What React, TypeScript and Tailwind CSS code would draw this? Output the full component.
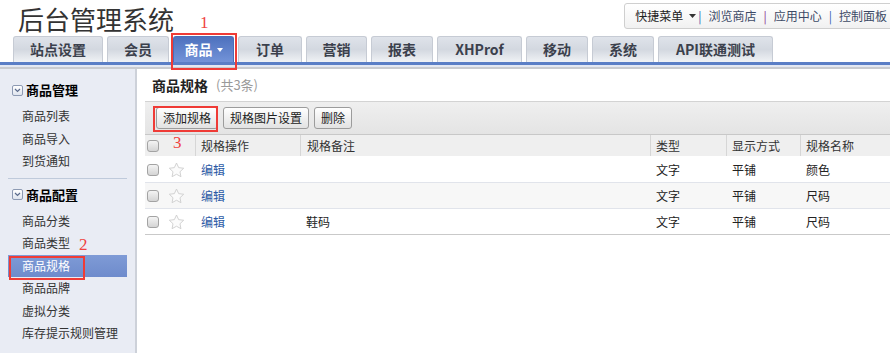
import { ReactNode } from 'react'

const font = { fontFamily: '"Noto Sans CJK SC", "Noto Sans", sans-serif' }

const tabs = [
  { label: '站点设置', w: 'w-[90px]' },
  { label: '会员', w: 'w-[62px]' },
  { label: '商品', w: 'w-[61px]', active: true },
  { label: '订单', w: 'w-[64px]' },
  { label: '营销', w: 'w-[61px]' },
  { label: '报表', w: 'w-[62px]' },
  { label: 'XHProf', w: 'w-[85px]' },
  { label: '移动', w: 'w-[62px]' },
  { label: '系统', w: 'w-[62px]' },
  { label: 'API联通测试', w: 'w-[115px]' },
]

const rows = [
  { note: '', type: '文字', mode: '平铺', name: '颜色' },
  { note: '', type: '文字', mode: '平铺', name: '尺码' },
  { note: '鞋码', type: '文字', mode: '平铺', name: '尺码' },
]

const Mark = ({ children, className }: { children: ReactNode; className: string }) => (
  <span
    className={`pointer-events-none absolute text-[17px] leading-none text-[#f0433f] ${className}`}
    style={{ fontFamily: '"Liberation Serif", serif' }}
  >
    {children}
  </span>
)

const Checkbox = () => (
  <span className="block h-[12px] w-[12px] rounded-[3px] border border-[#a3a3a3] bg-linear-to-b from-[#f4f4f4] to-[#d4d4d4]" />
)

const Star = () => (
  <svg width="17" height="16" viewBox="0 0 24 23" className="block">
    <path
      d="M12 1.5l3.1 6.6 7.2.9-5.3 5 1.4 7.1L12 17.6l-6.4 3.5L7 14l-5.3-5 7.2-.9z"
      fill="#fbfbfb"
      stroke="#cdcdcd"
      strokeWidth="1.3"
      strokeLinejoin="round"
    />
  </svg>
)

const GroupIcon = () => (
  <span className="flex h-[11px] w-[11px] items-center justify-center rounded-[2px] border border-[#8d9ab3] bg-linear-to-b from-white to-[#dfe4ee]">
    <svg width="7" height="5" viewBox="0 0 7 5">
      <path d="M1 1l2.5 2.5L6 1" fill="none" stroke="#5b6b8c" strokeWidth="1.2" />
    </svg>
  </span>
)

const SideGroup = ({ title, items, active }: { title: string; items: string[]; active?: string }) => (
  <div>
    <div className="flex h-[22px] items-center gap-[3px] pl-[12px] text-[13px] font-bold text-black">
      <GroupIcon />
      <span>{title}</span>
    </div>
    <div className="mt-[4px]">
      {items.map((it) => (
        <div
          key={it}
          className={
            it === active
              ? 'mx-[8px] flex h-[22.5px] items-center bg-linear-to-b from-[#7f9bd6] to-[#6e8bcc] pl-[14px] text-[12px] text-white'
              : 'mx-[8px] flex h-[22.5px] items-center pl-[14px] text-[12px] text-[#333]'
          }
        >
          {it}
        </div>
      ))}
    </div>
  </div>
)

const Button = ({ children }: { children: ReactNode }) => (
  <button className="flex h-[22px] items-center rounded-[3px] border border-[#9c9c9c] bg-linear-to-b from-white to-[#e2e2e2] px-[6px] text-[12px] text-[#222]">
    {children}
  </button>
)

export default function App() {
  return (
    <div className="relative h-[353px] w-[890px] overflow-hidden bg-white text-[#333]" style={font}>
      {/* header */}
      <div className="flex h-[36px] items-start">
        <div className="pl-[18px] text-[26px] leading-[38px] text-[#333]">后台管理系统</div>
        <div className="ml-auto mt-[3px] -mr-[4px] flex h-[26px] items-center rounded-l-[3px] border border-[#cfcfcf] bg-linear-to-b from-white to-[#f1f1f1] pl-[10px] pr-[6px] text-[12px]">
          <span className="text-[#222]">快捷菜单</span>
          <svg width="7" height="4" viewBox="0 0 7 4" className="ml-[6px]">
            <path d="M0 0h7L3.5 4z" fill="#333" />
          </svg>
          <span className="ml-[2px] text-[#3a62b0]">|</span>
          <span className="ml-[7px] text-[#3d4a66]">浏览商店</span>
          <span className="ml-[7px] text-[#8a2c8e]">|</span>
          <span className="ml-[7px] text-[#3d4a66]">应用中心</span>
          <span className="ml-[7px] text-[#3a62b0]">|</span>
          <span className="ml-[7px] text-[#3d4a66]">控制面板</span>
        </div>
      </div>

      {/* tabs */}
      <div className="relative flex h-[26px] items-end gap-[4px] pl-[13px]">
        {tabs.map((t) =>
          t.active ? (
            <div
              key={t.label}
              className={`${t.w} flex h-[26px] items-center justify-center gap-[4px] rounded-t-[3px] border border-b-0 border-[#4b6db7] bg-linear-to-b from-[#4d71be] to-[#7393d8] text-[14px] font-bold text-white`}
            >
              {t.label}
              <svg width="6" height="4" viewBox="0 0 6 4">
                <path d="M0 0h6L3 4z" fill="#fff" />
              </svg>
            </div>
          ) : (
            <div
              key={t.label}
              className={`${t.w} flex h-[26px] items-center justify-center rounded-t-[3px] border border-b-0 border-[#c6cbd4] bg-linear-to-b from-[#dfe3ea] via-[#d3d8e0] to-[#f0f2f5] text-[14px] font-bold text-[#3b404c]`}
            >
              {t.label}
            </div>
          ),
        )}
      </div>
      <div className="h-[3px] bg-[#5a7ec6]" />
      <div className="h-[2px] bg-[#e3e8f3]" />
      <div className="h-[2px] bg-[#c9cbd0]" />

      {/* body */}
      <div className="flex h-[284px]">
        <aside className="w-[137px] shrink-0 border-r-2 border-[#cdd1d9] bg-[#e9ecf4] pt-[10px]">
          <SideGroup title="商品管理" items={['商品列表', '商品导入', '到货通知']} />
          <div className="mx-[8px] mb-[5px] mt-[5px] h-px bg-[#bfcadb]" />
          <SideGroup
            title="商品配置"
            items={['商品分类', '商品类型', '商品规格', '商品品牌', '虚拟分类', '库存提示规则管理']}
            active="商品规格"
          />
        </aside>

        <main className="ml-[8px] flex-1">
          <div className="flex h-[32px] items-center pl-[7px]">
            <span className="text-[14px] font-bold text-[#222]">商品规格</span>
            <span className="ml-[8px] text-[13px] text-[#9a9a9a]">(共3条)</span>
          </div>
          <div className="flex h-[33px] items-center gap-[5px] border-t border-[#d3d3d3] bg-linear-to-b from-[#efefef] to-[#e4e4e4] pl-[11px]">
            <Button>添加规格</Button>
            <Button>规格图片设置</Button>
            <Button>删除</Button>
          </div>

          <div className="text-[12px]">
            <div className="flex h-[23px] items-center border-t border-[#c8c8c8] border-b border-b-white bg-[#efefef] text-[#333]">
              <div className="flex w-[50px] items-center pl-[2px]">
                <Checkbox />
              </div>
              <div className="flex h-full w-[105px] items-center border-l border-[#d6d6d6] pl-[5px]">规格操作</div>
              <div className="flex h-full w-[350px] items-center border-l border-[#d6d6d6] pl-[6px]">规格备注</div>
              <div className="flex h-full w-[76px] items-center border-l border-[#d6d6d6] pl-[5px]">类型</div>
              <div className="flex h-full w-[74px] items-center border-l border-[#d6d6d6] pl-[5px]">显示方式</div>
              <div className="flex h-full flex-1 items-center border-l border-[#d6d6d6] pl-[5px]">规格名称</div>
            </div>
            {rows.map((r, i) => (
              <div
                key={i}
                className={`flex h-[26px] items-center border-b ${i === 2 ? 'border-[#c9c9c9]' : 'border-[#e1e4eb]'} ${i === 1 ? 'bg-[#f7f7f7]' : 'bg-white'} text-[#222]`}
              >
                <div className="flex w-[50px] items-center gap-[9px] pl-[2px]">
                  <Checkbox />
                  <Star />
                </div>
                <div className="w-[105px] pl-[6px] text-[#2c5aa5]">编辑</div>
                <div className="w-[350px] pl-[6px]">{r.note}</div>
                <div className="w-[76px] pl-[6px]">{r.type}</div>
                <div className="w-[74px] pl-[6px]">{r.mode}</div>
                <div className="flex-1 pl-[6px]">{r.name}</div>
              </div>
            ))}
          </div>
        </main>
      </div>

      {/* annotations */}
      <div className="pointer-events-none absolute left-[171px] top-[33px] h-[37px] w-[66px] border-2 border-[#ef3b36]" />
      <Mark className="left-[200px] top-[14px]">1</Mark>
      <div className="pointer-events-none absolute left-[9px] top-[256px] h-[24px] w-[76px] border-2 border-[#ef3b36]" />
      <Mark className="left-[79px] top-[236px]">2</Mark>
      <div className="pointer-events-none absolute left-[153px] top-[106px] h-[26px] w-[65px] border-2 border-[#ef3b36]" />
      <Mark className="left-[173px] top-[134px]">3</Mark>
    </div>
  )
}
